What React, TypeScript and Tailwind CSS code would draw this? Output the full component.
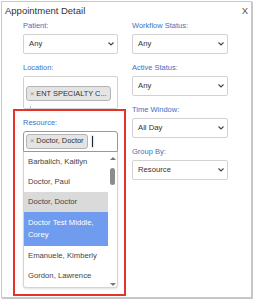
import React from 'react'

const font = { fontFamily: '"Liberation Sans", Arial, sans-serif' }

function Chevron() {
  return (
    <svg viewBox="0 0 6 4" className="w-[6px] h-[4px]" fill="none" stroke="#444" strokeWidth="1.1">
      <path d="M0.5 0.5 3 3 5.5 0.5" />
    </svg>
  )
}

function Label({ children }: { children: React.ReactNode }) {
  return <div className="text-[7.5px] leading-[9px] text-[#3d72bf] mb-[3.5px]">{children}</div>
}

function Select({ value }: { value: string }) {
  return (
    <div className="h-[20px] border border-[#d2d2d2] rounded-[2px] bg-white flex items-center justify-between pl-[5px] pr-[3px]">
      <span className="text-[7.7px] text-[#333]">{value}</span>
      <Chevron />
    </div>
  )
}

function Field({ label, value }: { label: string; value: string }) {
  return (
    <div>
      <Label>{label}</Label>
      <Select value={value} />
    </div>
  )
}

function Chip({ text }: { text: string }) {
  return (
    <span className="inline-flex items-center h-[15px] px-[3px] gap-[2px] bg-[#e4e4e4] border border-[#b4b4b4] rounded-[3px] text-[7.4px] text-[#333] whitespace-nowrap">
      <span className="text-[#8a8a8a]">×</span>
      {text}
    </span>
  )
}

const items = [
  { name: 'Barbalich, Kaitlyn' },
  { name: 'Doctor, Paul' },
  { name: 'Doctor, Doctor', hover: true },
  { name: 'Doctor Test Middle, Corey', active: true },
  { name: 'Emanuele, Kimberly' },
  { name: 'Gordon, Lawrence' },
]

export default function App() {
  return (
    <div className="w-[254px] h-[300px] bg-white pl-px pt-px" style={font}>
      <div className="w-[251px] h-[297px] border border-[#c9c9c9] shadow-[1px_1px_0_0_#c4c4c4] bg-white flex flex-col">
        <div className="flex justify-between items-start pl-[3px] pr-[3px] pt-[3px]">
          <span className="text-[9.5px] leading-[11px] text-[#333]">Appointment Detail</span>
          <span className="text-[9.5px] leading-[11px] text-[#555]">X</span>
        </div>

        <div className="grid grid-cols-[95px_96px] gap-x-[14px] pl-[21px] mt-[5px] items-start">
          <div className="flex flex-col">
            <Field label="Patient:" value="Any" />
            <div className="mt-[9.5px]">
              <Label>Location:</Label>
              <div className="h-[33px] border border-[#d2d2d2] rounded-[2px] bg-white pl-[2px] pt-[2.5px] flex flex-col">
                <div>
                  <Chip text="ENT SPECIALTY C..." />
                </div>
                <div className="ml-[4px] mt-[3px] w-px h-[5px] bg-[#bbb]" />
              </div>
            </div>

            <div className="mt-[0.5px] -ml-[10px] -mr-[8px] border-2 border-[#e2342b] pl-[8px] pr-[6px] pt-[7px] pb-[6.5px]">
              <Label>Resource:</Label>
              <div className="h-[21px] border border-[#9a9a9a] rounded-t-[3px] bg-white flex items-center pl-[2px] gap-[4px]">
                <Chip text="Doctor, Doctor" />
                <div className="w-px h-[11px] bg-[#222] shadow-[0_0_2px_1px_#d6e6fb]" />
              </div>
              <div className="h-[136px] border border-t-0 border-[#d5d5d5] rounded-b-[3px] bg-white shadow-[0_1px_2px_rgba(0,0,0,0.12)] flex overflow-hidden">
                <div className="flex-1 flex flex-col">
                  {items.map((it) => (
                    <div
                      key={it.name}
                      className={
                        'pl-[4px] pr-[2px] text-[7.7px] leading-[12px] ' +
                        (it.active
                          ? 'bg-[#6f9cee] text-white py-[5px]'
                          : it.hover
                            ? 'bg-[#dadada] text-[#444] py-[4px]'
                            : 'text-[#444] py-[4px]')
                      }
                    >
                      {it.name}
                    </div>
                  ))}
                </div>
                <div className="w-[9px] flex flex-col items-center pt-[5px] pb-[1px]">
                  <svg viewBox="0 0 6 3" className="w-[6px] h-[3px]">
                    <path d="M0 3 3 0 6 3z" fill="#777" />
                  </svg>
                  <div className="mt-[8.5px] w-[5px] h-[17px] rounded-full bg-[#8c8c8c]" />
                  <div className="flex-1" />
                  <svg viewBox="0 0 6 3" className="w-[6px] h-[3px]">
                    <path d="M0 0 3 3 6 0z" fill="#777" />
                  </svg>
                </div>
              </div>
            </div>
          </div>

          <div className="flex flex-col gap-[9.5px]">
            <Field label="Workflow Status:" value="Any" />
            <Field label="Active Status:" value="Any" />
            <Field label="Time Window:" value="All Day" />
            <Field label="Group By:" value="Resource" />
          </div>
        </div>
      </div>
    </div>
  )
}
